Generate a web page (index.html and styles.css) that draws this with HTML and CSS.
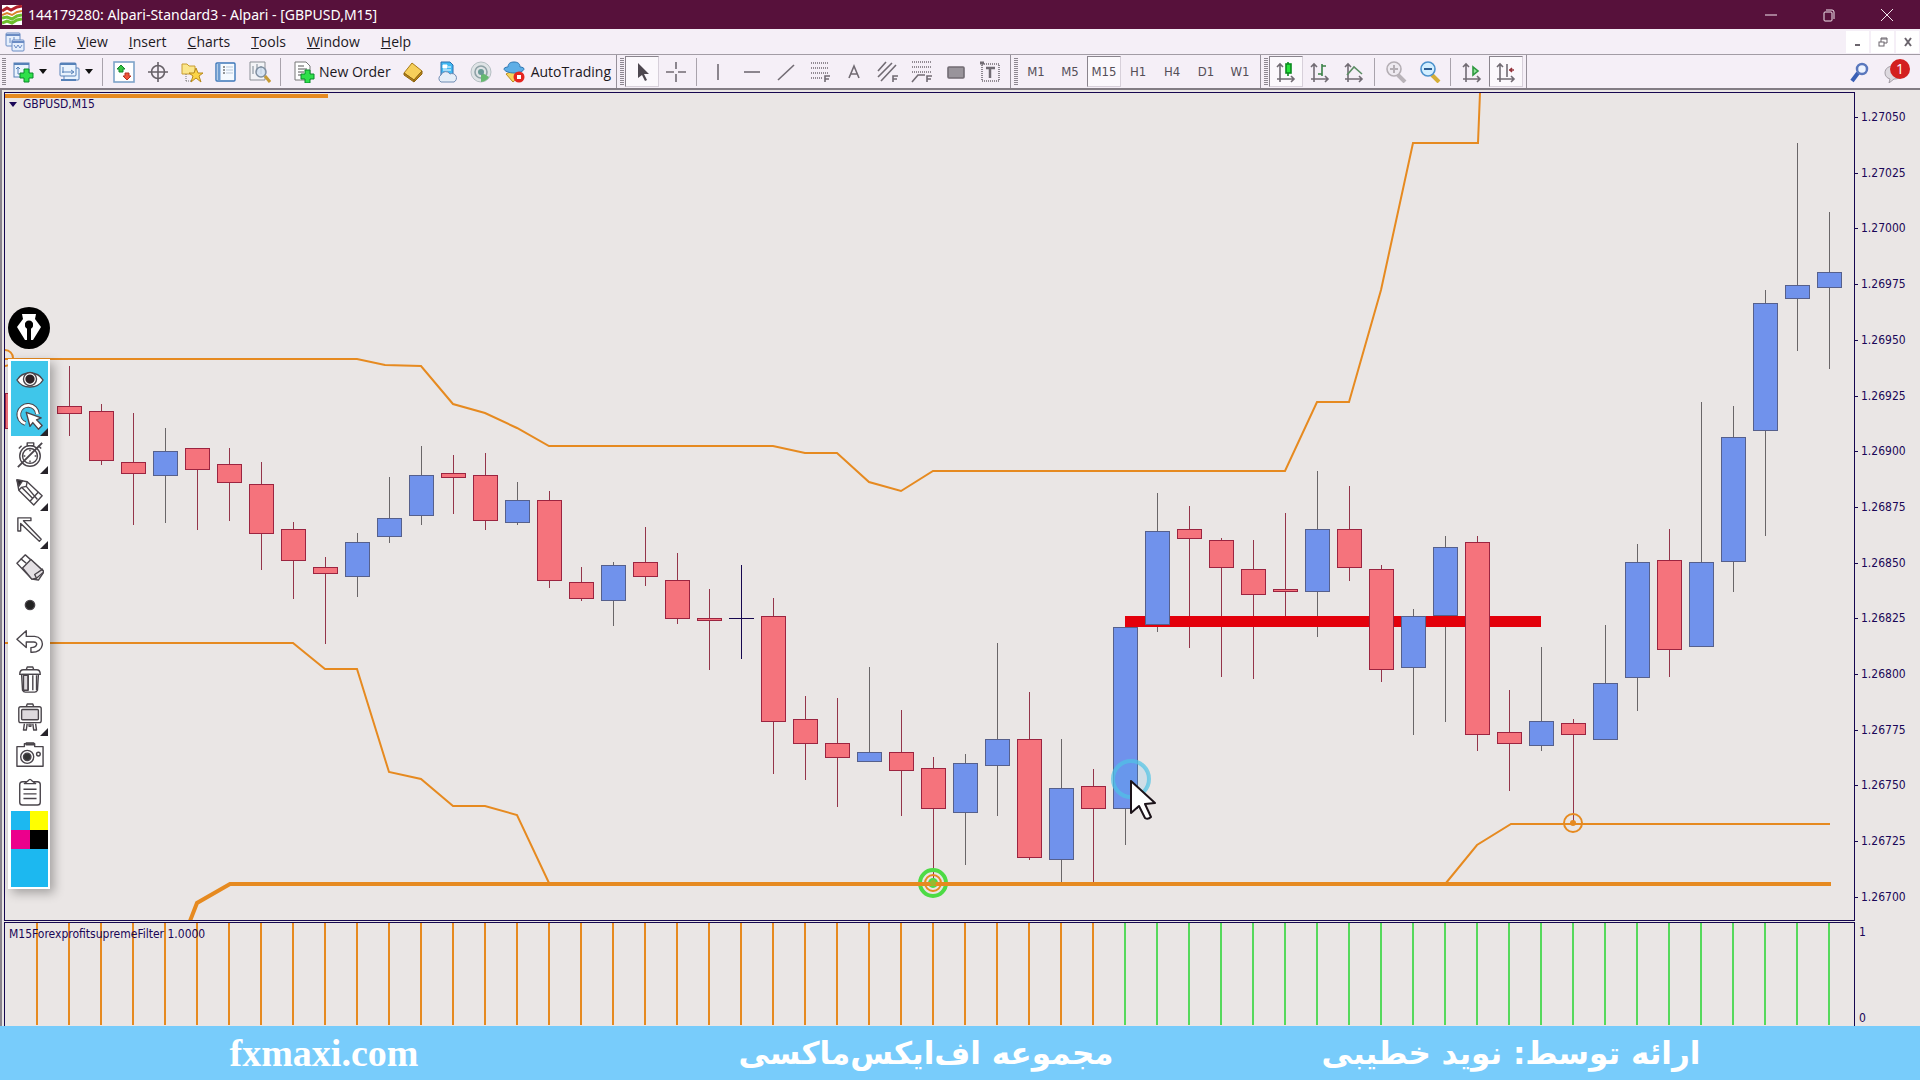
FILE: index.html
```html
<!DOCTYPE html>
<html lang="en">
<head>
    <meta charset="UTF-8">
    <meta name="viewport" content="width=device-width, initial-scale=1.0">
    <title>144179280: Alpari-Standard3 - Alpari - [GBPUSD,M15]</title>
    <link rel="stylesheet" href="styles.css">
</head>
<body>
    <header class="titlebar">
        <svg class="app-icon" viewBox="0 0 20 20"><rect width="20" height="20" fill="#fff"/><path d="M0 6l5-3 4 2 6-3 5-1" stroke="#b3202a" stroke-width="3" fill="none"/><path d="M0 10l5-2 5 2 5-3 5-1" stroke="#d9822b" stroke-width="2" fill="none"/><path d="M0 13l5-1 5 2 5-3 5-1M0 18l5-2 5 2 5-3 5-1" stroke="#6cc02c" stroke-width="3" fill="none"/></svg>
        <h1>144179280: Alpari-Standard3 - Alpari - [GBPUSD,M15]</h1>
        <div class="window-buttons">
            <button aria-label="Minimize"><svg viewBox="0 0 14 14"><path d="M1 7h12"/></svg></button>
            <button aria-label="Restore"><svg viewBox="0 0 14 14"><rect x="2" y="4" width="8" height="9" rx="1"/><path d="M4 2h6a2 2 0 0 1 2 2v7"/></svg></button>
            <button aria-label="Close"><svg viewBox="0 0 14 14"><path d="M1 1l12 12M13 1L1 13"/></svg></button>
        </div>
    </header>

    <nav class="menubar">
        <svg class="menu-icon" viewBox="0 0 20 20" fill="#e6effc" stroke="#6b8cc4"><rect x="1" y="1" width="14" height="13" rx="1"/><path d="M1 3h14" stroke-width="2"/><path d="M5 6v5M9 5v5" /><rect x="7" y="8" width="12" height="11" rx="1"/><path d="M7 10h12" stroke-width="2"/><path d="M9 13l2 3 2-3 2 3 2-3" fill="none"/></svg>
        <a href="#"><u>F</u>ile</a>
        <a href="#"><u>V</u>iew</a>
        <a href="#"><u>I</u>nsert</a>
        <a href="#"><u>C</u>harts</a>
        <a href="#"><u>T</u>ools</a>
        <a href="#"><u>W</u>indow</a>
        <a href="#"><u>H</u>elp</a>
        <div class="child-buttons">
            <button aria-label="Minimize chart"><svg viewBox="0 0 10 10"><path d="M2 8h5" stroke-width="2"/></svg></button>
            <button aria-label="Restore chart"><svg viewBox="0 0 10 10"><rect x="1" y="5" width="5" height="4"/><path d="M3 5V1h6v5H6M3 2h6"/></svg></button>
            <button aria-label="Close chart"><svg viewBox="0 0 10 10"><path d="M2 1l6 8M8 1L2 9" stroke-width="2"/></svg></button>
        </div>
    </nav>

    <div class="toolbar">
        <div class="group">
            <span class="grip"></span>
            <button class="drop" aria-label="New chart"><svg viewBox="0 0 22 22"><rect x="1" y="2" width="15" height="14" fill="#eaf3fd" stroke="#5681b8"/><path d="M1 3h15" stroke="#5681b8" stroke-width="2"/><path d="M5 6v7M3 8l2-2 2 2M5 13h6" stroke="#5681b8" fill="none"/><path d="M11 8h5v4h4v5h-4v4h-5v-4H7v-5h4z" fill="#2fe04a" stroke="#0b8a2a"/></svg><i class="caret"></i></button>
            <button class="drop" aria-label="Profiles"><svg viewBox="0 0 22 22" stroke="#5681b8" fill="#eaf3fd"><rect x="5" y="7" width="15" height="12" rx="1"/><rect x="1" y="2" width="16" height="13" rx="1"/><path d="M1 3h16M2 19h15" stroke-width="2"/><path d="M4 6v6M3 11h11M12 9l3 2-3 2" fill="none"/></svg><i class="caret"></i></button>
            <span class="sep"></span>
            <button aria-label="Market Watch"><svg viewBox="0 0 22 22"><rect x="1" y="1" width="20" height="20" fill="#fff" stroke="#7da3c9" stroke-width="1.6"/><path d="M8 4l4 4h-2v3H6V8H4z" fill="#35c441" stroke="#13852c"/><path d="M14 19l-4-4h2v-3h4v3h2z" fill="#f0553a" stroke="#b53120"/></svg></button>
            <button aria-label="Data Window"><svg viewBox="0 0 22 22" fill="none" stroke="#676168" stroke-width="1.6"><circle cx="11" cy="11" r="6.5"/><path d="M11 1v20M1 11h20"/></svg></button>
            <button aria-label="Navigator"><svg viewBox="0 0 22 22"><path d="M1 3h5l2 2h6v8H1z" fill="#fbe68c" stroke="#c99d31"/><path d="M5 13v7M5 20h5" stroke="#777" stroke-dasharray="1 1"/><path d="M15 7l2 5h5l-4 3 2 6-5-4-5 4 2-6-4-3h5z" fill="#fbd447" stroke="#b88a1c"/></svg></button>
            <button aria-label="Terminal"><svg viewBox="0 0 22 22"><rect x="1" y="2" width="19" height="18" rx="1" fill="#f5faff" stroke="#3c77b9" stroke-width="1.4"/><path d="M4 2v18" stroke="#6d9cd0" stroke-width="3"/><path d="M8 6h2M8 9h2M8 12h2" stroke="#333"/><path d="M11 6h7M11 9h7M11 12h7" stroke="#b9c7d9"/></svg></button>
            <button aria-label="Strategy Tester"><svg viewBox="0 0 22 22"><path d="M1 1h15v18H1z" fill="#f3f4f7" stroke="#8b8f96"/><path d="M4 5v8M8 3v8M12 5v8" stroke="#7d8894"/><circle cx="12" cy="11" r="5" fill="#cfe0f1" fill-opacity=".8" stroke="#7f8fa1" stroke-width="1.5"/><path d="M16 15l5 6" stroke="#c59a35" stroke-width="3"/></svg></button>
            <span class="sep"></span>
            <button class="wide order"><svg viewBox="0 0 22 22"><path d="M2 1h11l4 4v14H2z" fill="#fff" stroke="#777"/><path d="M5 5h6M5 8h9M5 11h6M5 14h4" stroke="#555"/><path d="M12 9h5v4h4v5h-4v4h-5v-4H8v-5h4z" fill="#2fe04a" stroke="#0b8a2a"/></svg>New Order</button>
            <button aria-label="MetaEditor"><svg viewBox="0 0 22 22"><path d="M2 12L10 2l10 8-8 9z" fill="#f6cf5b" stroke="#a87a16"/><path d="M2 12l10 7v2L2 14zM12 19l8-9v3l-8 8z" fill="#b98518" stroke="#8e6510"/></svg></button>
            <button aria-label="Virtual Hosting"><svg viewBox="0 0 22 22"><path d="M5 1h9l3 3v11H5z" fill="#42b8f2" stroke="#2a6fae"/><path d="M7 4h4v3H7zM12 6h3M7 9h8" stroke="#fff" fill="#fff"/><path d="M5 21a4 4 0 0 1 0-7 5 5 0 0 1 9-1 4 4 0 0 1 4 8z" fill="#e6eef8" stroke="#6f8bb3"/></svg></button>
            <button aria-label="Signals"><svg viewBox="0 0 22 22" fill="none"><circle cx="11" cy="11" r="10" fill="#dfe4e6" stroke="#b5bfc3"/><circle cx="11" cy="11" r="6" stroke="#8fa1a6" stroke-width="1.6"/><path d="M11 11v10a10 10 0 0 0 8-5z" fill="#66b970"/><circle cx="11" cy="11" r="3" fill="#6a9a96"/></svg></button>
            <button class="wide auto"><svg viewBox="0 0 22 22"><path d="M3 13l7 8 9-8-8-4z" fill="#f6d45c" stroke="#b98b1d"/><path d="M1 8c0-2 4-2 4-2 0-4 3-5 6-5s6 1 6 5c0 0 4 0 4 2s-5 4-10 4S1 10 1 8z" fill="#5eaee6" stroke="#2f78b4"/><circle cx="16" cy="16" r="5.5" fill="#e52520"/><rect x="14" y="14" width="4" height="4" fill="#fff"/></svg>AutoTrading</button>
        </div>

        <div class="group">
            <span class="grip"></span>
            <button class="pressed" aria-label="Cursor"><svg viewBox="0 0 22 22"><path d="M7 2v15l4-3 3 6 2-1-3-6h5z" fill="#4d474f"/></svg></button>
            <button aria-label="Crosshair"><svg class="line" viewBox="0 0 22 22"><path d="M11 1v7M11 13v8M1 11h8M13 11h8"/></svg></button>
            <span class="sep"></span>
            <button aria-label="Vertical line"><svg class="line" viewBox="0 0 22 22"><path d="M11 3v16"/></svg></button>
            <button aria-label="Horizontal line"><svg class="line" viewBox="0 0 22 22"><path d="M3 11h16"/></svg></button>
            <button aria-label="Trendline"><svg class="line" viewBox="0 0 22 22"><path d="M3 19L19 4"/></svg></button>
            <button aria-label="Fibonacci retracement"><svg class="line" viewBox="0 0 22 22"><path d="M2 2h18M2 7h18M2 12h18M2 17h11" stroke-dasharray="1 1"/><path d="M16 21v-6h5M16 18h4"/></svg></button>
            <button aria-label="Text"><svg class="line" viewBox="0 0 22 22"><path d="M6 17l5-12 5 12M8 13h6"/></svg></button>
            <button aria-label="Equidistant channel"><svg class="line" viewBox="0 0 22 22"><path d="M1 10L9 1M1 16L15 2M4 20L19 4"/><path d="M16 21v-6h5M16 18h4"/></svg></button>
            <button aria-label="Fibonacci expansion"><svg class="line" viewBox="0 0 22 22"><path d="M1 1h20M1 6h20M1 11h20" stroke-dasharray="1 1"/><path d="M1 21l6-7h7M16 21v-6h5M16 18h4"/></svg></button>
            <button aria-label="Rectangle"><svg class="line" viewBox="0 0 22 22"><rect x="3" y="6" width="16" height="11" rx="1" fill="#99949b"/></svg></button>
            <button aria-label="Text label"><svg class="line" viewBox="0 0 22 22"><rect x="3" y="3" width="17" height="17" stroke-dasharray="1 1"/><path d="M7 7h9M11 7v10" stroke-width="2.5"/><path d="M1 2h4" stroke-width="3"/></svg></button>
        </div>

        <div class="group periods">
            <span class="grip"></span>
            <button>M1</button>
            <button>M5</button>
            <button class="pressed">M15</button>
            <button>H1</button>
            <button>H4</button>
            <button>D1</button>
            <button>W1</button>
        </div>

        <div class="group">
            <span class="grip"></span>
            <button class="pressed" aria-label="Candlesticks"><svg class="line" viewBox="0 0 22 22"><path d="M5 3v18M2 6l3-3 3 3M2 18h17M16 15l3 3-3 3"/><path d="M13 1v14" stroke="#0a8a1e"/><rect x="11" y="3" width="5" height="9" fill="#26e33a" stroke="#0a8a1e"/></svg></button>
            <button aria-label="Bar chart"><svg class="line" viewBox="0 0 22 22"><path d="M5 3v18M2 6l3-3 3 3M2 18h17M16 15l3 3-3 3"/><path d="M13 3v12M13 5h4M9 13h4" stroke="#3a8146"/></svg></button>
            <button aria-label="Line chart"><svg class="line" viewBox="0 0 22 22"><path d="M5 3v18M2 6l3-3 3 3M2 18h17M16 15l3 3-3 3"/><path d="M4 14l7-8 8 7" stroke="#5c8d64"/></svg></button>
            <span class="sep"></span>
            <button aria-label="Zoom in"><svg viewBox="0 0 22 22"><path d="M13 14l7 7" stroke="#b9b3b9" stroke-width="4"/><circle cx="9" cy="8" r="7" fill="#eeeaf0" stroke="#b4aeb4" stroke-width="1.6"/><path d="M5 8h8M9 4v8" stroke="#b4aeb4" stroke-width="2"/></svg></button>
            <button aria-label="Zoom out"><svg viewBox="0 0 22 22"><path d="M13 14l7 7" stroke="#d5ae37" stroke-width="4"/><circle cx="9" cy="8" r="7" fill="#d3efff" stroke="#4b91cc" stroke-width="1.6"/><path d="M5 8h8" stroke="#2f5e93" stroke-width="2"/></svg></button>
            <span class="sep"></span>
            <button aria-label="Auto scroll"><svg class="line" viewBox="0 0 22 22"><path d="M5 3v18M2 6l3-3 3 3M2 18h17M16 15l3 3-3 3"/><path d="M12 6v8l5-4z" fill="#8fe39a" stroke="#2f9940"/></svg></button>
            <button class="pressed" aria-label="Chart shift"><svg class="line" viewBox="0 0 22 22"><path d="M5 3v18M2 6l3-3 3 3M2 18h17M16 15l3 3-3 3M12 3v13"/><path d="M19 9h-5M17 7l-2 2 2 2" stroke="#96343c"/></svg></button>
        </div>

        <div class="toolbar-end">
            <button aria-label="Search"><svg viewBox="0 0 22 22"><path d="M9 12l-6 8" stroke="#3a5fb5" stroke-width="4"/><circle cx="13" cy="8" r="5" fill="#eef4ff" stroke="#5a78bd" stroke-width="2.5"/></svg></button>
            <button class="chat" aria-label="Messages"><svg viewBox="0 0 22 22"><path d="M7 18l-1 4 5-4c6 0 9-3 9-7s-4-6-9-6-9 2-9 7c0 3 2 5 5 6z" fill="#ddd9df" stroke="#a39da5"/></svg><span class="badge">1</span></button>
        </div>
    </div>

    <main class="workspace">
        <section class="pane price">
            <div class="plot">
                <svg id="price-chart" viewBox="5 93 1849 827" preserveAspectRatio="none"></svg>
                <div class="symbol"><i class="caret"></i>GBPUSD,M15</div>
            </div>
            <div class="axis">
                <span>1.27050</span>
                <span>1.27025</span>
                <span>1.27000</span>
                <span>1.26975</span>
                <span>1.26950</span>
                <span>1.26925</span>
                <span>1.26900</span>
                <span>1.26875</span>
                <span>1.26850</span>
                <span>1.26825</span>
                <span>1.26800</span>
                <span>1.26775</span>
                <span>1.26750</span>
                <span>1.26725</span>
                <span>1.26700</span>
            </div>
        </section>
        <section class="pane filter">
            <div class="plot">
                <svg id="filter-chart" viewBox="5 923 1849 103" preserveAspectRatio="none"></svg>
                <div class="indicator">M15ForexprofitsupremeFilter 1.0000</div>
            </div>
            <div class="axis">
                <span>1</span>
                <span>0</span>
            </div>
        </section>
    </main>

    <!-- screen pen -->
    <aside class="pen">
        <button class="pen-logo" aria-label="Pen"><svg viewBox="0 0 42 42"><circle cx="21" cy="21" r="21"/><path d="M14 7h14l-1 5 6 8-8 13h-2V21a4 4 0 1 0-4 0v12h-2L9 20l6-8z" fill="#fff"/><path d="M21 19v17" stroke="#000" stroke-width="2"/><circle cx="21" cy="18" r="4"/></svg></button>
        <div class="pen-panel">
            <div class="pen-tools">
                <button class="on" aria-label="Show"><svg viewBox="0 0 30 30"><path d="M1 15C7 5 23 5 29 15 23 25 7 25 1 15z" fill="#fff"/><circle cx="15" cy="14" r="7" fill="#fff"/><circle cx="15" cy="14" r="4" fill="#2b2024" stroke="#2b2024" stroke-width="2"/></svg></button>
                <button class="on more" aria-label="Pointer"><svg viewBox="0 0 30 30"><path d="M10 22A10 10 0 1 1 23 12" stroke-width="5"/><path d="M10 22A10 10 0 1 1 23 12" stroke="#fff" stroke-width="3"/><path d="M11 10l4 15 3-4 6 7 4-4-6-6 5-2z" fill="#fff"/></svg></button>
                <button class="more" aria-label="Timer"><svg viewBox="0 0 30 30"><circle cx="15" cy="16" r="11"/><circle cx="15" cy="16" r="8"/><path d="M12 2h7v3h-7zM24 5l3 3M6 5L3 8M15 9v2M15 21v2M8 16h2M20 16h2"/><path d="M2 28L28 2" stroke-width="2"/></svg></button>
                <button class="more" aria-label="Pencil"><svg viewBox="0 0 30 30"><path d="M1 2l11 2 16 15-9 10L3 13z"/><path d="M1 2l6 1-4 6z" fill="#2d2a2e"/><path d="M12 4l-1 5-5 1-3 3M11 9l12 14M6 10l12 12M24 15l-9 10"/></svg></button>
                <button class="more" aria-label="Arrow"><svg viewBox="0 0 30 30"><path d="M2 2h14v3H8l19 20-2 2L5 8v8H2z"/></svg></button>
                <button aria-label="Eraser"><svg viewBox="0 0 30 30"><path d="M1 11l9-9 20 18-6 9-7-1z" fill="#fff"/><path d="M7 16l9-9 14 13-8 7-5 1z" fill="#e4e0e4"/><path d="M5 6l6 5M22 27l-2-4 9-6"/></svg></button>
                <button aria-label="Dot size"><svg viewBox="0 0 30 30"><circle cx="15" cy="15" r="5" fill="#222"/></svg></button>
                <button aria-label="Undo"><svg viewBox="0 0 30 30"><path d="M1 12L11 3v6h9c12 1 11 18-4 17v-5c7 0 8-6 3-6h-8v6z"/></svg></button>
                <button aria-label="Delete"><svg viewBox="0 0 30 30"><path d="M6 9l1 17q1 2 3 2h10q2 0 3-2l1-17z"/><rect x="8" y="10" width="5" height="16" fill="#ddd9dd"/><path d="M13 10v16M18 10v16M22 10v16M4 9q0-5 4-5h14q4 0 4 5zM11 4l1-3h6l1 3"/></svg></button>
                <button class="more" aria-label="Board"><svg viewBox="0 0 30 30"><rect x="3" y="4" width="24" height="17" rx="2"/><rect x="6" y="7" width="18" height="11" rx="1" fill="#ddd9dd"/><path d="M11 4l1-3h6l1 3M9 22l-1 7h3l1-7M18 22l1 7h3l-1-7M14 22v3h2v-3"/></svg></button>
                <button aria-label="Camera"><svg viewBox="0 0 30 30"><path d="M1 6h8V3h11v3h9v21H1z"/><path d="M11 2h8v2h-8z" fill="#555"/><circle cx="12" cy="17" r="7"/><circle cx="12" cy="17" r="4" fill="#333"/><circle cx="24" cy="14" r="2"/></svg></button>
                <button aria-label="Clipboard"><svg viewBox="0 0 30 30"><rect x="4" y="4" width="22" height="25" rx="3"/><path d="M9 6l4-3q2-3 4 0l4 3z" fill="#fff"/><path d="M8 12h14M8 17h14M8 22h14"/></svg></button>
            </div>
            <div class="swatches">
                <button class="cyan" aria-label="Cyan"></button>
                <button class="yellow" aria-label="Yellow"></button>
                <button class="magenta" aria-label="Magenta"></button>
                <button class="black" aria-label="Black"></button>
                <button class="current" aria-label="Current colour"></button>
            </div>
        </div>
    </aside>

    <footer class="banner">
        <a href="#">fxmaxi.com</a>
        <p lang="fa" dir="rtl">مجموعه اف‌ایکس‌ماکسی</p>
        <p lang="fa" dir="rtl">ارائه توسط: نوید خطیبی</p>
    </footer>

    <script src="chart.js"></script>
</body>
</html>
```

FILE: styles.css
```css
/* General */
* {
    box-sizing: border-box;
}

body {
    margin: 0;
    height: 100vh;
    display: flex;
    flex-direction: column;
    overflow: hidden;
    position: relative;
    font-family: 'Open Sans', 'Noto Sans', sans-serif;
    background-color: #f5eff7;
    color: #1c181e;
}

button {
    border: none;
    background: none;
    padding: 0;
    margin: 0;
    font: inherit;
    color: inherit;
    display: flex;
    align-items: center;
    justify-content: center;
}

svg {
    display: block;
    flex: none;
}

/* Title bar */
.titlebar {
    height: 29px;
    display: flex;
    align-items: center;
    background-color: #57113b;
    color: #fff;
    padding: 0 4px 0 2px;
}

.titlebar h1 {
    font-family: 'Noto Sans', sans-serif;
    font-size: 14px;
    line-height: 24px;
    font-weight: 400;
    margin: 0 0 0 6px;
}

.app-icon {
    width: 20px;
    height: 20px;
}

.window-buttons {
    display: flex;
    margin-left: auto;
}

.window-buttons button {
    width: 58px;
    height: 24px;
}

.window-buttons svg {
    width: 14px;
    height: 14px;
    fill: none;
    stroke: #f3e6ee;
}

/* Menu bar */
.menubar {
    height: 26px;
    display: flex;
    align-items: center;
    gap: 21px;
    border-bottom: 1px solid #a29ca5;
    padding-left: 5px;
    font-size: 14px;
}

.menubar a {
    color: inherit;
    text-decoration: none;
}

.menu-icon {
    width: 20px;
    height: 20px;
    margin-right: -12px;
}

.child-buttons {
    display: flex;
    gap: 2px;
    margin-left: auto;
    padding-right: 1px;
}

.child-buttons button {
    width: 23px;
    height: 22px;
    background-color: #fff;
}

.child-buttons svg {
    width: 10px;
    height: 10px;
    fill: none;
    stroke: #6b656d;
}

/* Toolbar */
.toolbar {
    height: 35px;
    display: flex;
    border-bottom: 2px solid #827c84;
    padding-left: 2px;
    font-size: 14px;
}

.group {
    display: flex;
    align-items: center;
    border-right: 1px solid #96909a;
    padding-right: 3px;
    margin-right: 3px;
}

.grip {
    width: 4px;
    height: 28px;
    margin-right: 1px;
    background: repeating-linear-gradient(#8d8790 0 1px, transparent 1px 2px);
}

.sep {
    width: 1px;
    height: 28px;
    background-color: #a9a3ac;
    margin: 0 4px 0 3px;
}

.toolbar button {
    width: 34px;
    height: 31px;
}

.toolbar svg {
    width: 22px;
    height: 22px;
}

.toolbar .line {
    fill: none;
    stroke: #716b73;
    stroke-width: 1.6;
}

.toolbar .drop {
    width: 46px;
    gap: 4px;
}

.caret {
    border: 4px solid transparent;
    border-top: 5px solid #111;
    border-bottom: none;
}

.toolbar .wide {
    width: auto;
    white-space: nowrap;
}

.toolbar .order {
    gap: 4px;
    padding: 0 5px 0 8px;
}

.toolbar .auto {
    gap: 6px;
    padding: 0 2px 0 5px;
}

.toolbar .pressed {
    background-color: #fbf8fc;
    border: 1px solid #d7d0da;
    border-top-color: #8a848d;
    border-left-color: #8a848d;
}

.periods {
    font-family: 'DejaVu Sans Condensed', 'DejaVu Sans', sans-serif;
    font-size: 13px;
    color: #544e57;
}

.toolbar-end {
    display: flex;
    align-items: center;
    margin-left: auto;
    padding-right: 9px;
}

.chat {
    position: relative;
}

.badge {
    position: absolute;
    top: 3px;
    right: 1px;
    width: 20px;
    height: 20px;
    border-radius: 50%;
    background-color: #d3201f;
    color: #fff;
    font-size: 14px;
    line-height: 20px;
}

/* Charts */
.workspace {
    flex: 1;
    min-height: 0;
    display: flex;
    flex-direction: column;
    gap: 1px;
    background-color: #eae6e5;
    border-left: 2px solid #8a848d;
    padding: 2px 0 0 2px;
    font-family: 'DejaVu Sans Condensed', 'DejaVu Sans', sans-serif;
    font-size: 12px;
    line-height: 16px;
    color: #1a0757;
}

.pane {
    display: flex;
}

.price {
    flex: 1;
    min-height: 0;
}

.filter {
    height: 104px;
}

.plot {
    position: relative;
    flex: 1;
    border: 1px solid #16074f;
}

.filter .plot {
    border-bottom: none;
}

.plot svg {
    position: absolute;
    width: 100%;
    height: 100%;
}

.symbol,
.indicator {
    position: absolute;
    left: 4px;
    top: 3px;
}

.symbol {
    display: flex;
    align-items: center;
    gap: 6px;
}

.symbol .caret {
    border-top-color: #1a0757;
}

.axis {
    width: 65px;
    display: flex;
    flex-direction: column;
    justify-content: space-between;
}

.axis span {
    padding-left: 6px;
    position: relative;
}

.price .axis {
    padding: 17px 0 16px;
}

.price .axis span::before {
    content: "";
    position: absolute;
    left: 0;
    top: 8px;
    width: 3px;
    height: 1px;
    background-color: #16074f;
}

.filter .axis {
    padding-top: 2px;
}

.filter .axis span {
    padding-left: 4px;
}

.thin {
    fill: none;
    stroke: #e68a20;
    stroke-width: 2;
}

.thick {
    fill: none;
    stroke: #e68a20;
    stroke-width: 4;
}

.bull {
    fill: #7092ec;
    stroke: #56608c;
}

.bear {
    fill: #f5737c;
    stroke: #9c2440;
}

.wick-bull {
    fill: #6a6668;
}

.wick-bear {
    fill: #94354a;
}

.doji {
    fill: #16074f;
}

.level {
    fill: #e3000b;
}

.ring {
    fill: none;
    stroke: #4ddb45;
    stroke-width: 4;
}

.bar-down {
    fill: #e68a20;
}

.bar-up {
    fill: #56d95c;
}

/* Screen pen */
.pen {
    position: absolute;
    left: 8px;
    top: 307px;
}

.pen-logo svg {
    width: 42px;
    height: 42px;
}

.pen-panel {
    width: 42px;
    margin-top: 10px;
    padding: 2px 2px 2px 3px;
    background-color: #fff;
    box-shadow: 4px 4px 10px rgba(0, 0, 0, 0.3);
}

.pen-tools {
    height: 450px;
    display: grid;
    grid-template-rows: repeat(12, 1fr);
}

.pen-tools button {
    position: relative;
}

.pen-tools svg {
    width: 28px;
    height: 28px;
    fill: none;
    stroke: #4a454b;
    stroke-width: 1.5;
    stroke-linejoin: round;
}

.pen-tools .on {
    background-color: #3fc6ea;
}

.pen-tools .more::after {
    content: "";
    position: absolute;
    right: 0;
    bottom: 0;
    border-left: 8px solid transparent;
    border-bottom: 8px solid #27242a;
}

.swatches {
    display: grid;
    grid-template-columns: 1fr 1fr;
    grid-template-rows: 19px 19px 38px;
}

.cyan,
.current {
    background-color: #1cb8f0;
}

.yellow {
    background-color: #ff0;
}

.magenta {
    background-color: #ec008c;
}

.black {
    background-color: #000;
}

.current {
    grid-column: 1 / 3;
}

/* Bottom banner */
.banner {
    height: 54px;
    display: grid;
    grid-template-columns: 648fr 556fr 614fr;
    align-items: center;
    text-align: center;
    padding-right: 102px;
    background-color: #78ccfb;
    color: #fff;
    font-weight: 700;
}

.banner a {
    font-family: 'Liberation Serif', serif;
    font-size: 38px;
    line-height: 50px;
    color: inherit;
    text-decoration: none;
}

.banner p {
    font-family: 'DejaVu Sans', sans-serif;
    font-size: 31px;
    line-height: 50px;
    margin: 0;
    white-space: nowrap;
}
```

FILE: chart.js
```js
const STEP = 32;
const FIRST = 69;

// direction, high, body top, body bottom, low
const candles = [
    ['d', 366, 406, 414, 436], ['d', 404, 411, 461, 465], ['d', 413, 462, 474, 525],
    ['u', 428, 451, 476, 523], ['d', 448, 448, 470, 530], ['d', 448, 464, 483, 521],
    ['d', 462, 484, 534, 570], ['d', 522, 529, 561, 599], ['d', 557, 567, 574, 644],
    ['u', 533, 542, 577, 597], ['u', 477, 518, 537, 543], ['u', 446, 475, 516, 525],
    ['d', 455, 473, 478, 514], ['d', 453, 475, 521, 530], ['u', 482, 500, 523, 525],
    ['d', 491, 500, 581, 588], ['d', 567, 582, 599, 601], ['u', 562, 565, 601, 626],
    ['d', 527, 562, 577, 586], ['d', 553, 580, 619, 624], ['d', 589, 618, 621, 670],
    ['x', 565, 618, 619, 659], ['d', 598, 616, 722, 774], ['d', 696, 719, 744, 780],
    ['d', 698, 743, 758, 807], ['u', 667, 752, 762, 762], ['d', 710, 752, 771, 816],
    ['d', 757, 768, 809, 880], ['u', 754, 763, 813, 865], ['u', 643, 739, 766, 816],
    ['d', 692, 739, 858, 860], ['u', 739, 788, 860, 882], ['d', 769, 786, 809, 882],
    ['u', 627, 627, 809, 845], ['u', 493, 531, 625, 632], ['d', 506, 529, 539, 648],
    ['d', 538, 540, 568, 677], ['d', 540, 569, 595, 679], ['d', 513, 589, 592, 616],
    ['u', 471, 529, 592, 637], ['d', 486, 529, 568, 581], ['d', 565, 569, 670, 682],
    ['u', 609, 616, 668, 735], ['u', 536, 547, 616, 722], ['d', 536, 542, 735, 751],
    ['d', 690, 732, 744, 791], ['u', 647, 721, 746, 751], ['d', 719, 723, 735, 823],
    ['u', 625, 683, 740, 740], ['u', 544, 562, 678, 711], ['d', 529, 560, 650, 677],
    ['u', 402, 562, 647, 647], ['u', 406, 437, 562, 592], ['u', 290, 303, 431, 536],
    ['u', 143, 285, 299, 351], ['u', 212, 272, 288, 369]
];

const upper = '5,359 357,359 385,365 421,366 453,404 485,413 517,428 549,446 773,446 805,453 837,453 869,482 901,491 933,471 1285,471 1317,402 1349,402 1381,290 1413,143 1478,143 1480,93';
const lower = '5,643 293,643 325,669 357,669 389,772 421,779 453,806 485,806 517,815 549,883';
const lowerRight = '1446,883 1477,845 1511,824 1830,824';
const base = '190,921 197,903 230,884 1831,884';

function rect(cls, x, y, w, h) {
    return `<rect class="${cls}" x="${x}" y="${y}" width="${w}" height="${h}" shape-rendering="crispEdges"/>`;
}

function line(cls, points) {
    return `<polyline class="${cls}" points="${points}"/>`;
}

function drawPrice() {
    let wicks = '';
    let bodies = '';

    candles.forEach(([dir, high, top, bottom, low], i) => {
        const x = FIRST + i * STEP;
        if (dir === 'x') {
            bodies += rect('doji', x, high, 1, low - high) + rect('doji', x - 12, top, 25, 1);
            return;
        }
        const cls = dir === 'u' ? 'bull' : 'bear';
        wicks += rect('wick-' + cls, x, high, 1, low - high);
        bodies += `<rect class="${cls}" x="${x - 11.5}" y="${top + 0.5}" width="24" height="${bottom - top - 1}"/>`;
    });

    document.getElementById('price-chart').innerHTML =
        rect('bar-down', 5, 94, 323, 4) +
        line('thin', upper) + line('thin', lower) + line('thin', lowerRight) +
        '<circle class="thin" cx="5" cy="358" r="8"/>' +
        rect('bear', 5, 393, 12, 35) +
        wicks +
        rect('level', 1125, 616, 416, 11) +
        bodies +
        '<circle class="ring" cx="933" cy="883" r="13"/>' +
        '<circle cx="933" cy="883" r="5" fill="#4ddb45"/>' +
        line('thick', base) +
        '<circle class="thin" cx="933" cy="883" r="8"/>' +
        '<circle cx="933" cy="883" r="3" fill="#9ab82f"/>' +
        '<circle class="thin" cx="1573" cy="823" r="9"/>' +
        '<circle class="bar-down" cx="1573" cy="823" r="3"/>' +
        '<circle cx="1131" cy="779" r="18" fill="#3fb4f0" fill-opacity=".15" stroke="#4fc3e6" stroke-opacity=".7" stroke-width="4"/>' +
        '<path d="M1131 781v32l8-7 6 12q3 2 6-1l-6-13 10-1z" fill="#fff" stroke="#1b1218" stroke-width="2" stroke-linejoin="round"/>';
}

function drawFilter() {
    let bars = '';
    for (let x = FIRST - STEP; x <= 1829; x += STEP) {
        bars += rect(x < 1125 ? 'bar-down' : 'bar-up', x - 1, 923, 2, 102);
    }
    document.getElementById('filter-chart').innerHTML = bars;
}

drawPrice();
drawFilter();
```
